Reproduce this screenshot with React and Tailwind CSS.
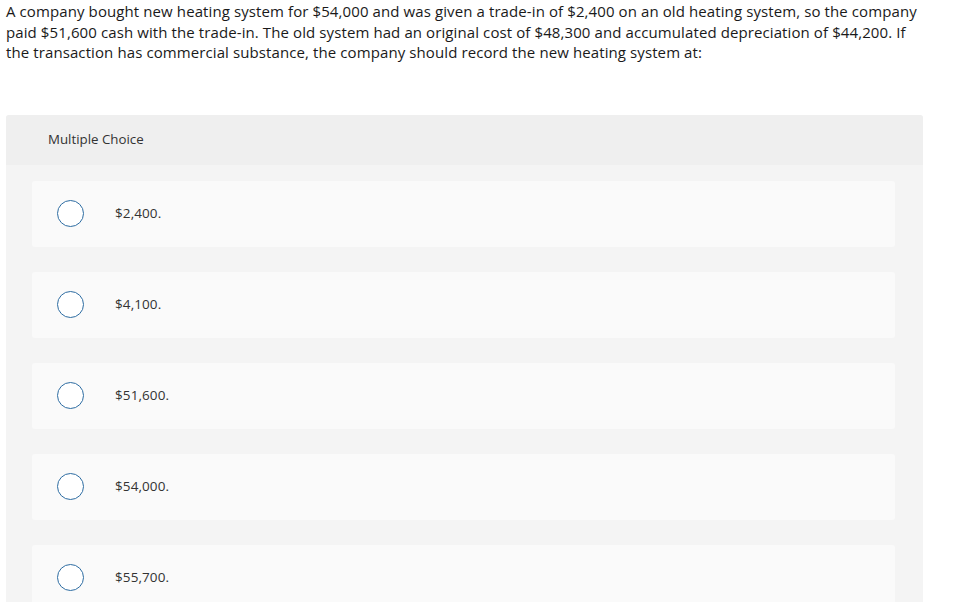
const CHOICES = ['$2,400.', '$4,100.', '$51,600.', '$54,000.', '$55,700.']

export default function App() {
  return (
    <div className="bg-white min-h-screen px-[6px] pt-[1px] text-[#333]" style={{ fontFamily: '"Open Sans", Lato, sans-serif' }}>
      {/* question stem, broken where the original wraps */}
      <p className="text-[15px] leading-[20.5px] tracking-[0.1px] text-[#1a1a1a] whitespace-nowrap">
        A company bought new heating system for $54,000 and was given a trade-in of $2,400 on an old heating system, so the company
        <br />
        paid $51,600 cash with the trade-in. The old system had an original cost of $48,300 and accumulated depreciation of $44,200. If
        <br />
        the transaction has commercial substance, the company should record the new heating system at:
      </p>

      <div className="mt-[52px] w-[917px] rounded-[3px] bg-[#f4f4f4] overflow-hidden">
        <div className="h-[50px] bg-[#efefef] flex items-center pl-[42px] text-[13.3px] text-[#333]">
          Multiple Choice
        </div>
        <div className="flex flex-col gap-[25px] pl-[26px] pr-[28px] pt-[16px] pb-[20px]">
          {CHOICES.map(c => (
            <div key={c} className="h-[66px] rounded-[3px] bg-[#fafafa] flex items-center">
              <span className="ml-[25px] w-[27px] h-[27px] rounded-full border-[1.5px] border-[#2d6ca2] bg-white shrink-0" />
              <span className="ml-[31px] text-[13.5px] tracking-[0.1px] text-[#333]">{c}</span>
            </div>
          ))}
        </div>
      </div>
    </div>
  )
}
